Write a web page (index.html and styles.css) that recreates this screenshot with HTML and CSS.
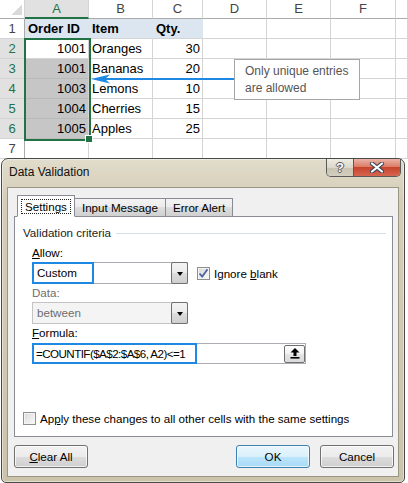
FILE: index.html
```html
<!DOCTYPE html>
<html lang="en">
<head>
  <meta charset="UTF-8">
  <title>Data Validation</title>
  <link rel="stylesheet" href="styles.css">
</head>
<body>
  <div class="sheet">
    <div class="grid">
      <div class="cell hdr colhdr corner"></div>
      <div class="cell hdr colhdr on">A</div>
      <div class="cell hdr colhdr">B</div>
      <div class="cell hdr colhdr">C</div>
      <div class="cell hdr colhdr">D</div>
      <div class="cell hdr colhdr">E</div>
      <div class="cell hdr colhdr">F</div>
      <div class="cell hdr colhdr"></div>

      <div class="cell hdr rowhdr">1</div>
      <div class="cell head b">Order ID</div>
      <div class="cell head b">Item</div>
      <div class="cell head b">Qty.</div>
      <div class="cell"></div><div class="cell"></div><div class="cell"></div><div class="cell"></div>

      <div class="cell hdr rowhdr on">2</div>
      <div class="cell num">1001</div>
      <div class="cell">Oranges</div>
      <div class="cell num">30</div>
      <div class="cell"></div><div class="cell"></div><div class="cell"></div><div class="cell"></div>

      <div class="cell hdr rowhdr on">3</div>
      <div class="cell num shade">1001</div>
      <div class="cell">Bananas</div>
      <div class="cell num">20</div>
      <div class="cell"></div><div class="cell"></div><div class="cell"></div><div class="cell"></div>

      <div class="cell hdr rowhdr on">4</div>
      <div class="cell num shade">1003</div>
      <div class="cell">Lemons</div>
      <div class="cell num">10</div>
      <div class="cell"></div><div class="cell"></div><div class="cell"></div><div class="cell"></div>

      <div class="cell hdr rowhdr on">5</div>
      <div class="cell num shade">1004</div>
      <div class="cell">Cherries</div>
      <div class="cell num">15</div>
      <div class="cell"></div><div class="cell"></div><div class="cell"></div><div class="cell"></div>

      <div class="cell hdr rowhdr on">6</div>
      <div class="cell num shade">1005</div>
      <div class="cell">Apples</div>
      <div class="cell num">25</div>
      <div class="cell"></div><div class="cell"></div><div class="cell"></div><div class="cell"></div>

      <div class="cell hdr rowhdr">7</div>
      <div class="cell"></div><div class="cell"></div><div class="cell"></div>
      <div class="cell"></div><div class="cell"></div><div class="cell"></div><div class="cell"></div>
    </div>

    <div class="selection"></div>
    <div class="handle"></div>

    <svg class="arrow" width="143" height="10" viewBox="0 0 143 10">
      <rect x="12" y="4" width="131" height="2" fill="#1e88e5"/>
      <polygon points="0,5 19,0.5 14,5 19,9.5" fill="#1e88e5"/>
    </svg>
    <div class="callout">Only unique entries<br>are allowed</div>
  </div>

  <div class="dialog">
    <div class="titlebar">
      <span class="title">Data Validation</span>
      <div class="caps">
        <div class="cap-help">?</div>
        <div class="cap-close">
          <svg width="16" height="11" viewBox="0 0 16 11">
            <path d="M3 1.5 L13 9.5 M13 1.5 L3 9.5" stroke="#3b4658" stroke-width="4.2" stroke-linecap="round"/>
            <path d="M3 1.5 L13 9.5 M13 1.5 L3 9.5" stroke="#fff" stroke-width="2.2" stroke-linecap="round"/>
          </svg>
        </div>
      </div>
    </div>

    <div class="client">
      <div class="tabs">
        <div class="tab active"><span class="focus">Settings</span></div>
        <div class="tab">Input Message</div>
        <div class="tab">Error Alert</div>
      </div>

      <div class="panel">
        <div class="group-title">Validation criteria</div>

        <div class="fields">
          <div class="label"><u>A</u>llow:</div>
          <div class="row">
            <div class="combo">
              <span class="val">Custom</span>
              <span class="drop"></span>
              <span class="mark mark-allow"></span>
            </div>
            <div class="check">
              <span class="box">
                <svg width="11" height="11" viewBox="0 0 11 11">
                  <path d="M1.5 5.5 L4.2 8.6 L9.5 1.2" fill="none" stroke="#4d62a0" stroke-width="1.8"/>
                </svg>
              </span>
              <span>Ignore <u>b</u>lank</span>
            </div>
          </div>

          <div class="label dim">Data:</div>
          <div class="combo off">
            <span class="val">between</span>
            <span class="drop"></span>
          </div>

          <div class="label"><u>F</u>ormula:</div>
          <div class="input">
            <span class="val formula">=COUNTIF($A$2:$A$6, A2)&lt;=1</span>
            <span class="pick">
              <svg width="10" height="11" viewBox="0 0 10 11">
                <polygon points="5,0 0.5,4.6 9.5,4.6" fill="#000"/>
                <rect x="3.5" y="4" width="3" height="4" fill="#000"/>
                <rect x="0.5" y="9" width="9" height="1.6" fill="#000"/>
              </svg>
            </span>
            <span class="mark mark-formula"></span>
          </div>
        </div>

        <div class="apply">
          <span class="box"></span>
          <span>Ap<u>p</u>ly these changes to all other cells with the same settings</span>
        </div>
      </div>

      <div class="buttons">
        <button class="btn"><u>C</u>lear All</button>
        <div class="btn-group">
          <button class="btn def">OK</button>
          <button class="btn">Cancel</button>
        </div>
      </div>
    </div>
  </div>
</body>
</html>
```

FILE: styles.css
```css
* {
  box-sizing: border-box;
}

body {
  margin: 0;
  width: 408px;
  height: 483px;
  overflow: hidden;
  position: relative;
  background: #fff;
  font-family: "Liberation Sans", Arial, sans-serif;
}

/* spreadsheet */
.sheet {
  font-size: 13px;
  color: #000;
}

.grid {
  display: grid;
  grid-template-columns: 25px 64px 64px 50px 64px 64px 65px 12px;
  grid-template-rows: 19px;
  grid-auto-rows: 20px;
}

.cell {
  border-right: 1px solid #d4d4d4;
  border-bottom: 1px solid #d4d4d4;
  line-height: 20px;
  padding: 0 2px 0 3px;
  white-space: nowrap;
  overflow: hidden;
}

.hdr {
  text-align: center;
  color: #444;
  padding: 0;
}

.colhdr {
  border-bottom-color: #ababab;
  line-height: 18px;
}

.rowhdr {
  border-right-color: #ababab;
}

.hdr.on {
  background: #e1e1e1;
  color: #217346;
}

.colhdr.on {
  border-bottom: 2px solid #217346;
}

.corner {
  background: linear-gradient(to top left, #d9d9d9 50%, transparent 50%) no-repeat;
  background-size: 11px 11px;
  background-position: right 2px bottom 3px;
}

.head {
  background: #dce6f1;
  border-right-color: #dce6f1;
}

.b {
  font-weight: bold;
}

.num {
  text-align: right;
}

.shade {
  background: #c6c6c6;
  border-bottom-color: #b9b9b9;
}

.selection {
  position: absolute;
  left: 24px;
  top: 38px;
  width: 67px;
  height: 103px;
  border: 2px solid #217346;
}

.handle {
  position: absolute;
  left: 86px;
  top: 136px;
  width: 6px;
  height: 6px;
  background: #217346;
  outline: 1px solid #fff;
}

.arrow {
  position: absolute;
  left: 91px;
  top: 74px;
}

.callout {
  position: absolute;
  left: 234px;
  top: 59px;
  width: 126px;
  height: 41px;
  border: 1px solid #a6a6a6;
  background: #fff;
  padding: 3px 0 0 10px;
  font-size: 12px;
  line-height: 17px;
  color: #555;
}

/* dialog */
.dialog {
  position: absolute;
  left: 1px;
  top: 158px;
  width: 404px;
  height: 325px;
  border: 1px solid #4a4a4a;
  border-radius: 7px 7px 5px 5px;
  background: linear-gradient(#e1dccb, #d5cdb7 40px, #cbc3aa);
  box-shadow: inset 0 0 0 1px rgba(255, 255, 255, 0.45);
  display: flex;
  flex-direction: column;
  font-size: 11.6px;
  color: #000;
}

.titlebar {
  height: 28px;
  display: flex;
  justify-content: space-between;
  align-items: flex-start;
}

.title {
  font-size: 12px;
  line-height: 14px;
  padding: 6px 0 0 7px;
  color: #111;
}

.caps {
  display: flex;
  height: 18px;
  margin-right: 3px;
  border: 1px solid #5a5a5a;
  border-top: none;
  border-radius: 0 0 5px 5px;
  overflow: hidden;
}

.cap-help {
  width: 27px;
  border-right: 1px solid #5a5a5a;
  background: linear-gradient(#eeebe2, #dcd7c9 50%, #c9c2b0 50%, #d4cebf);
  text-align: center;
  font-weight: bold;
  font-size: 13px;
  line-height: 17px;
  color: #fff;
  text-shadow: 1px 0 #4a5262, -1px 0 #4a5262, 0 1px #4a5262, 0 -1px #4a5262;
}

.cap-close {
  width: 46px;
  background: linear-gradient(#eab3a5, #dc7d67 45%, #c8442b 50%, #d66650);
  display: flex;
  align-items: center;
  justify-content: center;
}

.client {
  flex: 1;
  margin: 0 5px 5px 5px;
  border: 1px solid #9a9684;
  background: #f0f0f0;
  padding: 7px 5px 0 6px;
  display: flex;
  flex-direction: column;
}

.tabs {
  display: flex;
  align-items: flex-end;
  height: 22px;
  padding-left: 3px;
  margin-bottom: -1px;
  position: relative;
}

.tab {
  height: 19px;
  padding: 0 7px;
  margin-left: -1px;
  border: 1px solid #898c95;
  background: linear-gradient(#f3f3f3, #ebebeb 50%, #dddddd 50%, #d0d0d0);
  line-height: 17px;
  white-space: nowrap;
}

.tab.active {
  height: 22px;
  margin-left: 0;
  padding: 0 3px;
  background: #fff;
  border-bottom-color: #fff;
  display: flex;
  align-items: center;
  z-index: 1;
}

.focus {
  border: 1px dotted #222;
  padding: 0 3px;
  line-height: 13px;
}

.panel {
  height: 221px;
  border: 1px solid #898c95;
  background: #fff;
  padding: 8px 0 0 8px;
}

.group-title {
  display: flex;
  align-items: center;
  gap: 5px;
  line-height: 16px;
  color: #222;
}

.group-title::after {
  content: "";
  flex: 1;
  height: 1px;
  margin-right: 6px;
  background: #d5dfe5;
}

.fields {
  padding-left: 9px;
}

.label {
  line-height: 16px;
  margin-top: 1px;
}

.fields .label:first-child {
  margin-top: 4px;
}

.dim {
  color: #6d6d6d;
}

.row {
  display: flex;
  align-items: center;
  margin-top: 1px;
}

.combo {
  position: relative;
  display: flex;
  width: 156px;
  height: 22px;
  border: 1px solid #abadb3;
  background: #fff;
  margin-top: 1px;
}

.row .combo {
  margin-top: 0;
}

.combo.off {
  background: #f4f4f4;
  color: #6d6d6d;
  border-color: #c4c4c4;
}

.val {
  flex: 1;
  padding-left: 4px;
  line-height: 20px;
  white-space: nowrap;
}

.drop {
  width: 17px;
  margin: -1px -1px -1px 0;
  border: 1px solid #707070;
  border-radius: 2px;
  background: linear-gradient(#f3f3f3, #ebebeb 50%, #dddddd 50%, #cfcfcf);
  display: flex;
  align-items: center;
  justify-content: center;
}

.drop::after {
  content: "";
  border-left: 3.5px solid transparent;
  border-right: 3.5px solid transparent;
  border-top: 4px solid #000;
  margin-top: 1px;
}

.mark {
  position: absolute;
  left: -1px;
  top: -1px;
  bottom: -1px;
  border: 2px solid #1e88e5;
}

.mark-allow {
  width: 62px;
}

.mark-formula {
  width: 165px;
}

.check {
  display: flex;
  align-items: center;
  gap: 4px;
  margin-left: 9px;
}

.box {
  width: 13px;
  height: 13px;
  border: 1px solid #8e8f8f;
  background: linear-gradient(135deg, #d8d8d8, #fbfbfb);
  box-shadow: inset 0 0 0 1px #f4f4f4;
  display: flex;
  align-items: center;
  justify-content: center;
}

.input {
  position: relative;
  display: flex;
  align-items: center;
  width: 274px;
  height: 21px;
  margin-top: 2px;
  border: 1px solid #abadb3;
  background: #fff;
}

.formula {
  padding-left: 3px;
  letter-spacing: -0.55px;
}

.pick {
  width: 21px;
  height: 18px;
  border: 1px solid #707070;
  border-radius: 2px;
  background: linear-gradient(#fdfdfd, #f1f1f1 50%, #e4e4e4 50%, #dadada);
  display: flex;
  align-items: center;
  justify-content: center;
}

.apply {
  display: flex;
  align-items: center;
  gap: 4px;
  margin-top: 48px;
  white-space: nowrap;
}

.buttons {
  display: flex;
  justify-content: space-between;
  margin: 8px -1px 0 0;
}

.btn-group {
  display: flex;
  gap: 10px;
}

.btn {
  width: 74px;
  height: 23px;
  padding: 0;
  border: 1px solid #707070;
  border-radius: 3px;
  background: linear-gradient(#f2f2f2, #ebebeb 50%, #dddddd 50%, #cfcfcf);
  box-shadow: inset 0 0 0 1px rgba(255, 255, 255, 0.7);
  font: inherit;
  color: #000;
  line-height: 21px;
  text-align: center;
}

.btn.def {
  border-color: #3c7fb1;
  background: linear-gradient(#eaf6fd, #d9f0fc 50%, #bee6fd 50%, #a7d9f5);
}
```
